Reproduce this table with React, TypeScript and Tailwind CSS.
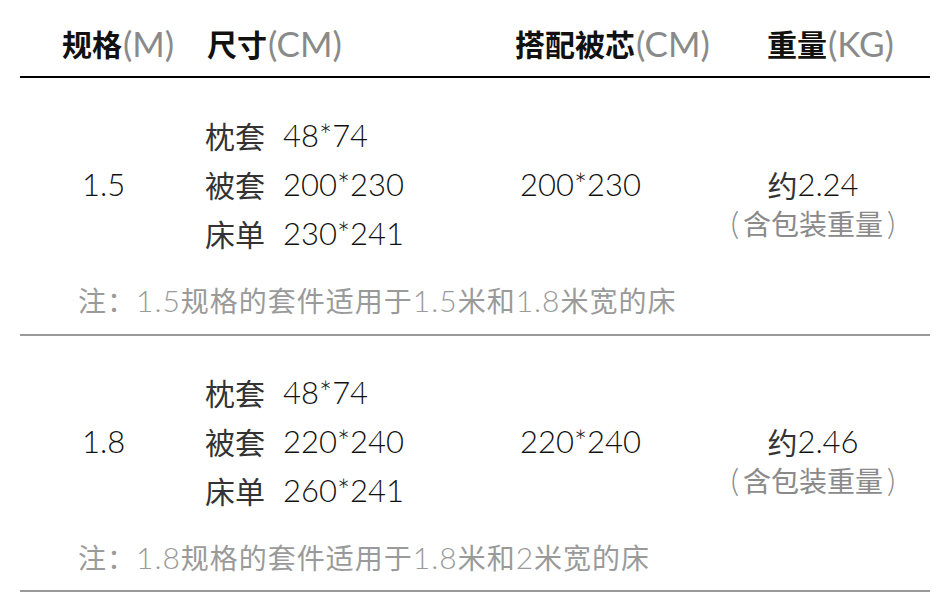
import React from "react";

const cjk = '"Noto Sans CJK SC", sans-serif';
const latin = '"Lato", "Noto Sans CJK SC", sans-serif';

function L({ children, cls = "" }: { children: React.ReactNode; cls?: string }) {
  return (
    <span className={cls} style={{ fontFamily: latin }}>
      {children}
    </span>
  );
}

type Sec = {
  spec: string;
  items: [string, string][];
  core: string;
  weight: string;
  note: [string, string, string, string, string];
};

const sections: Sec[] = [
  {
    spec: "1.5",
    items: [
      ["枕套", "48*74"],
      ["被套", "200*230"],
      ["床单", "230*241"],
    ],
    core: "200*230",
    weight: "2.24",
    note: ["1.5", "规格的套件适用于", "1.5", "米和", "1.8"],
  },
  {
    spec: "1.8",
    items: [
      ["枕套", "48*74"],
      ["被套", "220*240"],
      ["床单", "260*241"],
    ],
    core: "220*240",
    weight: "2.46",
    note: ["1.8", "规格的套件适用于", "1.8", "米和", "2"],
  },
];

function Section({ s, first }: { s: Sec; first: boolean }) {
  return (
    <div
      className={`flex flex-col border-b-2 border-[#9a9a9a] ${
        first ? "h-[258px] pt-[33px]" : "h-[256px] pt-[32px]"
      }`}
    >
      <div className="flex text-[30px] text-[#333]">
        <div className="w-[175px] pl-[62px] flex items-center">
          <L cls="font-light text-[31px] leading-[49px] text-[#111]">{s.spec}</L>
        </div>
        <div className="w-[305px] pl-[10px] flex flex-col">
          {s.items.map(([k, v]) => (
            <div key={k} className="h-[49px] flex items-center whitespace-nowrap">
              <span>{k}</span>
              <L cls="font-light ml-[18px] text-[31px] text-[#111]">{v}</L>
            </div>
          ))}
        </div>
        <div className="w-[240px] pl-[20px] flex items-center">
          <L cls="font-light text-[31px] leading-[49px] text-[#111]">{s.core}</L>
        </div>
        <div className="w-[190px] pr-[44px] flex flex-col items-center text-center">
          <div className="h-[49px] mt-[49px] flex items-center whitespace-nowrap">
            <span>约</span>
            <L cls="font-light text-[31px] text-[#111]">{s.weight}</L>
          </div>
          <div className="h-[27px] flex items-center text-[28px] text-[#8a8a8a] whitespace-nowrap">
            <L cls="font-light text-[32px] mr-[4px]">(</L>
            <span>含包装重量</span>
            <L cls="font-light text-[32px] ml-[4px]">)</L>
          </div>
        </div>
      </div>
      <div className="mt-[22px] pl-[58px] h-[40px] flex items-center text-[28px] text-[#9a9a9a] whitespace-nowrap tracking-[1px]">
        <span>注：</span>
        <L cls="font-light text-[30px]">{s.note[0]}</L>
        <span>{s.note[1]}</span>
        <L cls="font-light text-[30px]">{s.note[2]}</L>
        <span>{s.note[3]}</span>
        <L cls="font-light text-[30px]">{s.note[4]}</L>
        <span>米宽的床</span>
      </div>
    </div>
  );
}

function H({ zh, en, w, pl }: { zh: string; en: string; w: string; pl: string }) {
  return (
    <div className={`${w} ${pl} flex items-center`}>
      <span className="font-bold text-[#111] text-[30px]">{zh}</span>
      <L cls="font-normal text-[35px] text-[#8a8a8a] ml-[1px]">{en}</L>
    </div>
  );
}

export default function App() {
  return (
    <div className="w-[950px] h-[598px] bg-white overflow-hidden" style={{ fontFamily: cjk }}>
      <div className="mx-[20px]">
        <div className="h-[78px] flex items-center pt-[10px] border-b-2 border-black whitespace-nowrap">
          <H zh="规格" en="(M)" w="w-[175px]" pl="pl-[42px]" />
          <H zh="尺寸" en="(CM)" w="w-[305px]" pl="pl-[12px]" />
          <H zh="搭配被芯" en="(CM)" w="w-[240px]" pl="pl-[15px]" />
          <H zh="重量" en="(KG)" w="w-[190px]" pl="pl-[27px]" />
        </div>
        {sections.map((s, i) => (
          <Section key={s.spec} s={s} first={i === 0} />
        ))}
      </div>
    </div>
  );
}
